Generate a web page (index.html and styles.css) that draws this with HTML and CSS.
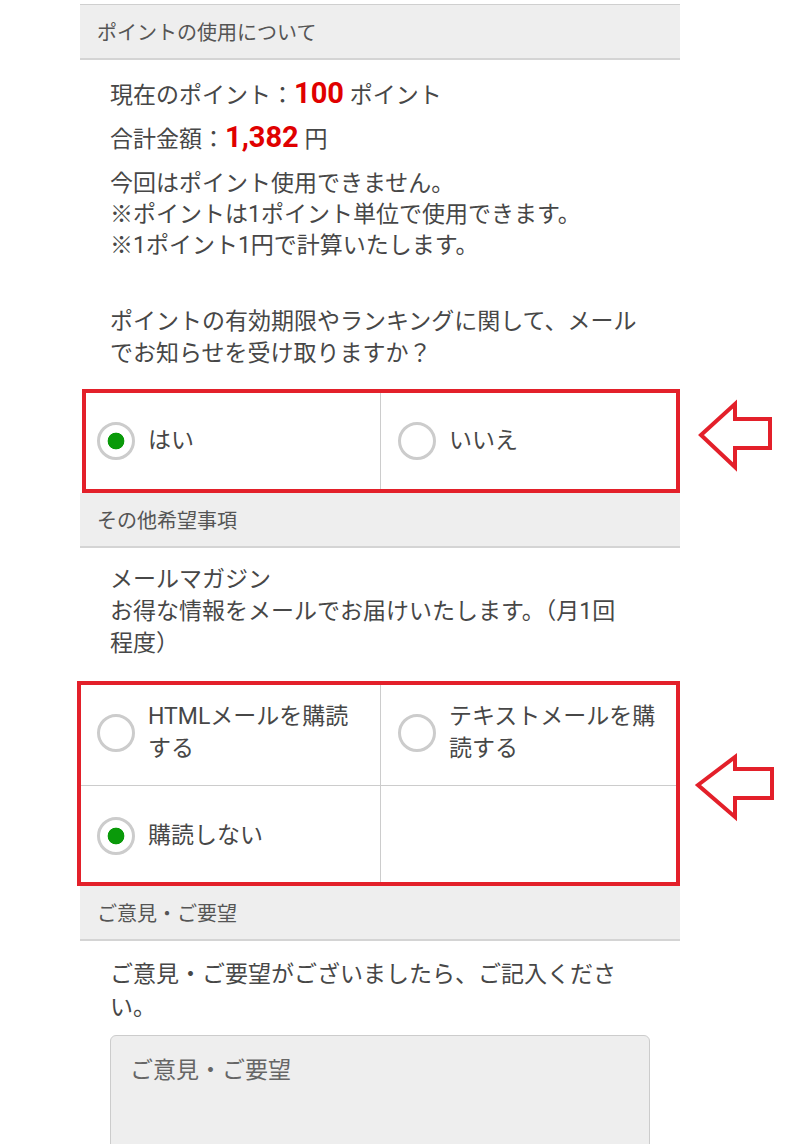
FILE: index.html
```html
<!DOCTYPE html>
<html lang="ja">
<head>
<meta charset="utf-8">
<title>ご注文手続き</title>
<link rel="stylesheet" href="styles.css">
</head>
<body>
<main class="page">
  <h2 class="section-head first">ポイントの使用について</h2>
  <section class="section-body points">
    <p class="stat">現在のポイント：<strong class="num">100</strong> ポイント</p>
    <p class="stat">合計金額：<strong class="num">1,382</strong> 円</p>
    <p class="note">今回はポイント使用できません。<br>※ポイントは1ポイント単位で使用できます。<br>※1ポイント1円で計算いたします。</p>
    <p class="question">ポイントの有効期限やランキングに関して、メール<br>でお知らせを受け取りますか？</p>
  </section>
  <div class="choices choices-yesno">
    <label class="choice"><input type="radio" class="radio" name="notify" checked><span class="choice-text">はい</span></label>
    <label class="choice"><input type="radio" class="radio" name="notify"><span class="choice-text">いいえ</span></label>
    <svg class="arrow arrow-1" width="100" height="80" viewBox="0 0 100 80"><polygon points="11,40 45,9 45,24 80,24 80,53 45,53 45,72" /></svg>
  </div>

  <h2 class="section-head">その他希望事項</h2>
  <section class="section-body mailmag">
    <p class="question">メールマガジン<br>お得な情報をメールでお届けいたします。（月1回<br>程度）</p>
  </section>
  <div class="choices choices-mail">
    <label class="choice"><input type="radio" class="radio" name="mail"><span class="choice-text">HTMLメールを購読<br>する</span></label>
    <label class="choice"><input type="radio" class="radio" name="mail"><span class="choice-text">テキストメールを購<br>読する</span></label>
    <label class="choice row2"><input type="radio" class="radio" name="mail" checked><span class="choice-text">購読しない</span></label>
    <div class="choice row2 empty"></div>
    <svg class="arrow arrow-2" width="100" height="80" viewBox="0 0 100 80"><polygon points="8,30 45,2 45,14 82,14 82,43 45,43 45,62" /></svg>
  </div>

  <h2 class="section-head">ご意見・ご要望</h2>
  <section class="section-body opinion">
    <p class="question">ご意見・ご要望がございましたら、ご記入くださ<br>い。</p>
    <textarea class="comment" placeholder="ご意見・ご要望"></textarea>
  </section>
</main>
</body>
</html>
```

FILE: styles.css
```css
html, body {
  margin: 0;
  padding: 0;
  background: #ffffff;
}

body {
  padding-top: 4px;
  font-family: Roboto, "Noto Sans CJK JP", "Noto Sans", sans-serif;
  color: #474747;
}

.page {
  width: 600px;
  margin-left: 80px;
}

.section-head {
  margin: 0;
  height: 53px;
  display: flex;
  align-items: center;
  padding-left: 17px;
  background: #eeeeee;
  border-bottom: 2px solid #d4d4d4;
  font-size: 20px;
  font-weight: normal;
  color: #555555;
}

.section-head.first {
  border-top: 1px solid #cfcfcf;
}

.section-body {
  padding: 0 30px;
  font-size: 23px;
}

.section-body p {
  margin: 0;
}

.points {
  padding-top: 14px;
}

.stat {
  line-height: 44px;
}

.num {
  font-size: 29px;
  font-weight: bold;
  color: #e00000;
  line-height: 1;
}

.note {
  margin-top: 6px !important;
  line-height: 31px;
}

.question {
  line-height: 32px;
}

.points .question {
  margin-top: 45px;
}

.mailmag {
  padding-top: 16px;
}

.opinion {
  padding-top: 17px;
}

.opinion .question {
  line-height: 33px;
}

/* choice grids */
.choices {
  position: relative;
  display: grid;
  grid-template-columns: 300px 300px;
}

.choices-yesno {
  margin-top: 19px;
}

.choices-mail {
  margin-top: 21px;
}

.choice {
  box-sizing: border-box;
  height: 104px;
  display: flex;
  align-items: center;
  gap: 13px;
  padding-left: 17px;
  font-size: 23px;
  line-height: 32px;
  color: #474747;
}

.choice:nth-child(2n) {
  border-left: 1px solid #cccccc;
}

.choice.row2 {
  height: 101px;
  border-top: 1px solid #cccccc;
}

.choice-text {
  display: block;
}

.radio {
  appearance: none;
  -webkit-appearance: none;
  flex: none;
  box-sizing: border-box;
  width: 38px;
  height: 38px;
  margin: 0;
  border: 3px solid #cccccc;
  border-radius: 50%;
  background: #ffffff;
}

.radio:checked {
  background: radial-gradient(circle, #0a9a0a 0 8px, #ffffff 8.7px);
}

/* red annotation box */
.choices::after {
  content: "";
  position: absolute;
  top: 0;
  right: 0;
  bottom: 0;
  left: 2px;
  border: 4px solid #e3202a;
  pointer-events: none;
}

.choices-mail::after {
  left: -3px;
}

.arrow {
  position: absolute;
  left: 610px;
  overflow: visible;
}

.arrow polygon {
  fill: #ffffff;
  stroke: #e3202a;
  stroke-width: 4;
  stroke-linejoin: miter;
}

.arrow-1 {
  top: 6px;
}

.arrow-2 {
  top: 74px;
}

.comment {
  display: block;
  box-sizing: border-box;
  width: 540px;
  height: 160px;
  margin-top: 11px;
  padding: 20px 19px;
  border: 1px solid #cccccc;
  border-radius: 6px;
  background: #eeeeee;
  font-family: Roboto, "Noto Sans CJK JP", sans-serif;
  font-size: 23px;
  line-height: 30px;
  color: #474747;
  resize: none;
}

.comment::placeholder {
  color: #666666;
}
```
